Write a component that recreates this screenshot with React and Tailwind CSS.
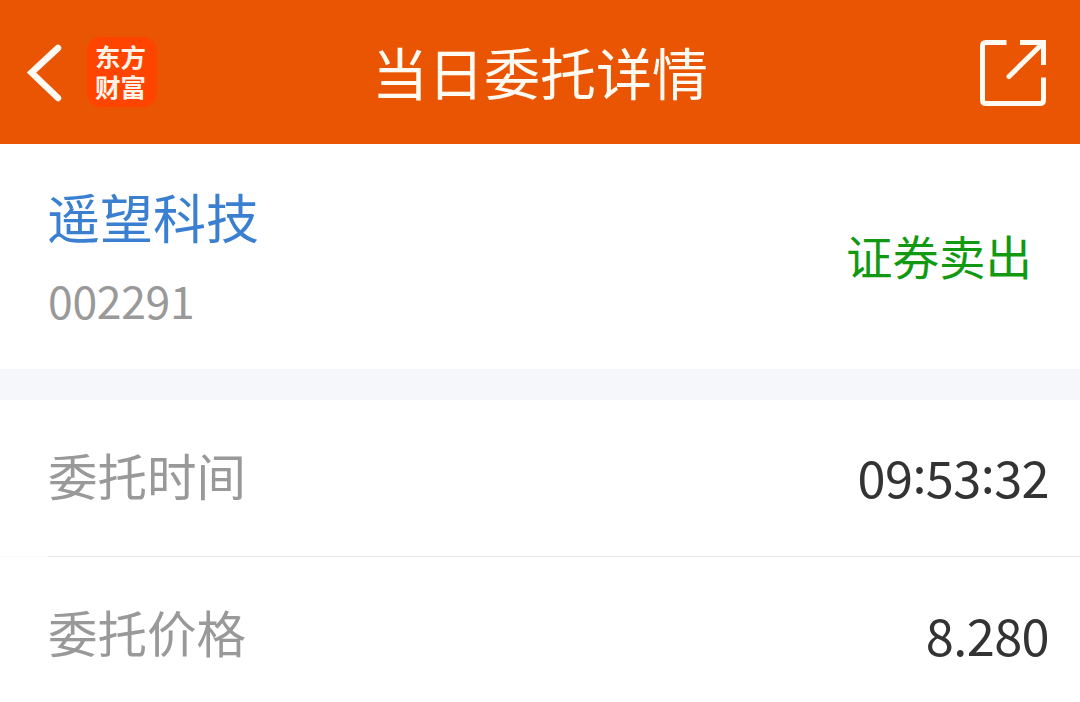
const font = "font-['Noto_Sans_CJK_SC','Noto_Sans',sans-serif]";

function Value({ text }) {
  return (
    <span className="mb-[3px] flex text-[50.5px] leading-none tracking-[-0.6px] text-[#333333]">
      {text.split(/(:)/).map((part, i) => (
        <span key={i} className={part === ":" ? "-mt-[5px]" : ""}>{part}</span>
      ))}
    </span>
  );
}

function Row({ label, value, divider }) {
  return (
    <div className="flex h-[157px] flex-col">
      <div className="flex flex-1 items-center justify-between pl-12 pr-[31px]">
        <span className="mb-[7px] text-[49.5px] leading-none text-[#999999]">{label}</span>
        <Value text={value} />
      </div>
      {divider && (
        <div className="h-px bg-[#f9f9f9] pl-12">
          <div className="h-px bg-[#e9e9e9]" />
        </div>
      )}
    </div>
  );
}

export default function App() {
  return (
    <div className={`h-[702px] w-[1080px] overflow-hidden bg-white ${font}`}>
      <header className="grid h-36 grid-cols-[1fr_auto_1fr] items-center bg-[#ea5504] text-white">
        <div className="flex items-center">
          <svg className="ml-6 h-[66px] w-10" viewBox="0 0 40 66" fill="none" stroke="#fffaf4" strokeWidth="6.5" strokeLinecap="round">
            <path d="M34 9 7.5 33.5 34 59" strokeLinejoin="miter" />
          </svg>
          <div className="ml-[23px] flex h-[70px] w-[70px] items-center justify-center rounded-[14px] bg-[#ff4400] pr-[3px] pb-[3px] text-[25.5px] leading-[30px] font-bold text-[#fff3e8]">
            <p>东方<br />财富</p>
          </div>
        </div>
        <h1 className="mb-0.5 text-[56px] leading-none font-normal text-[#fffaf2]">当日委托详情</h1>
        <svg className="mr-[32px] h-[70px] w-[70px] justify-self-end" viewBox="0 0 70 70" fill="none" stroke="#fffaf2" strokeWidth="5">
          <path d="M28.5 5.5H8Q4.500 5.500 4.500 9V63Q4.500 66.500 8 66.500H62Q65.500 66.500 65.500 63V40.500" />
          <path d="M42 5.500H65.500V28" />
          <path d="M64 7 31 39.500" strokeLinecap="round" />
        </svg>
      </header>
      <section className="flex h-[225px] items-center justify-between pl-12 pr-12">
        <div className="flex flex-col gap-[35px]">
          <span className="-ml-px text-[53px] leading-none text-[#3a7fd0]">遥望科技</span>
          <span className="text-[44.5px] leading-none tracking-[-0.3px] text-[#999999]">002291</span>
        </div>
        <span className="mb-0.5 text-[46.5px] leading-none text-[#119a11]">证券卖出</span>
      </section>
      <div className="h-[31px] bg-[#f5f7fa]" />
      <Row label="委托时间" value="09:53:32" divider />
      <Row label="委托价格" value="8.280" />
    </div>
  );
}
